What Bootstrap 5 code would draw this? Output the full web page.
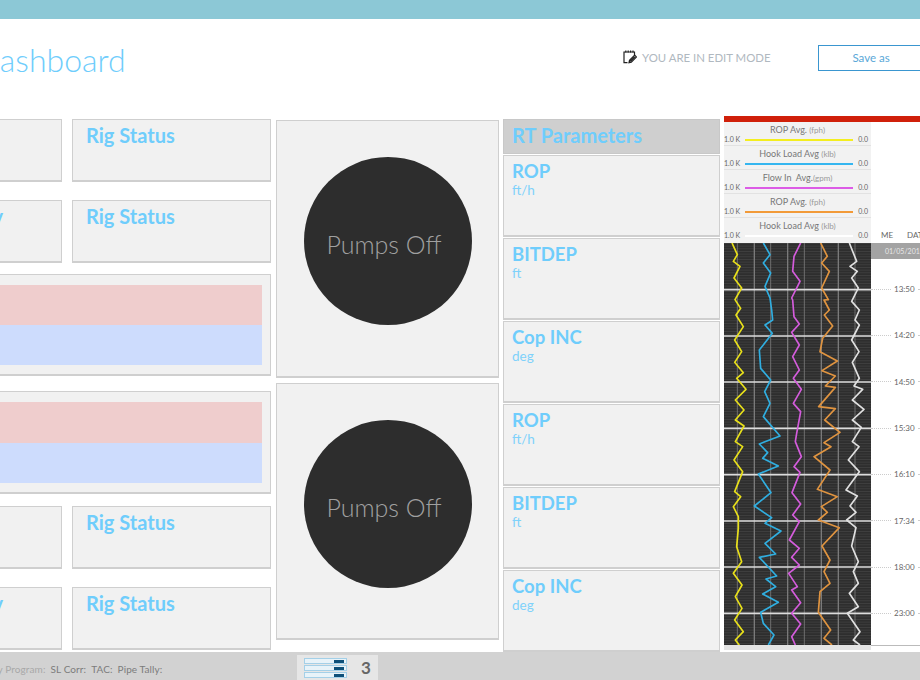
<!DOCTYPE html>
<html lang="en">
<head>
    <meta charset="UTF-8">
    <meta name="viewport" content="width=device-width, initial-scale=1.0">
    <title>Dashboard</title>
    <link rel="stylesheet" href="https://cdn.jsdelivr.net/npm/bootstrap@5.3.0/dist/css/bootstrap.min.css">
    <style>
        html, body { height: 100%; overflow: hidden; background: #fff; }
        body { font-family: Lato, "Noto Sans", sans-serif; }
        .screen { width: 1060px; margin-left: -130px; height: 680px; }
        .top-strip { height: 19px; background: #8cc8d6; }
        .head-area { height: 77px; margin-bottom: 20px; padding-left: 106px; }
        .page-title { font-size: 32px; font-weight: 300; color: #6fcdfc; margin: 0; width: 647px; padding-top: 6px; }
        .edit-note { width: 195px; font-size: 11.4px; color: #b0b8c0; gap: 5px; }
        .save-btn { width: 106px; height: 26px; padding: 0; font-size: 11.5px; color: #5aa8d8; border: 1px solid #3a96d0; border-radius: 0; background: #fff; }
        .body-area { height: 536px; }
        .col-left { width: 401px; padding-top: 3px; }
        .col-mid { width: 223px; margin-left: 5px; padding-top: 4px; gap: 5px; }
        .col-rt { width: 217px; margin-left: 4px; padding-top: 3px; gap: 1px; }
        .col-chart { margin-left: 4px; width: 196px; }
        .tile { background: #f1f1f1; border: 1px solid #cfcfcf; border-bottom-width: 2px; border-radius: 0; }
        .tile-pair { gap: 10px; height: 63px; }
        .tile-pair .tile { flex: 1 1 0; padding: 3px 13px; }
        .tile-pair .tile + .tile { flex: 0 0 199px; }
        .tile-name { font-size: 20px; font-weight: 700; color: #6fcdfc; line-height: 24px; white-space: nowrap; }
        .hide-start { padding-left: 2px; }
        .mt-a { margin-top: 18px; }
        .mt-b { margin-top: 11px; }
        .mt-c { margin-top: 15px; }
        .mt-d { margin-top: 12px; }
        .stack-tile { height: 102px; padding: 10px 8px 9px 0; }
        .stack-tall { height: 103px; }
        .bar-red { flex: 1; background: #efcdcd; }
        .bar-blue { flex: 1; background: #cddcfd; }
        .pump-tile { height: 257.5px; padding-bottom: 14px; }
        .pump-disc { width: 168px; height: 168px; background: #2d2d2d; color: #a0a0a0; font-size: 25px; font-weight: 300; padding: 7px 7px 0 0; }
        .rt-head { height: 35px; background: #cfcfcf; border: 1px solid #c8c8c8; padding: 0 8px; font-size: 20px; font-weight: 700; color: #6fcdfc; }
        .rt-row { height: 82px; padding: 3px 8px; }
        .rt-name { font-size: 18.5px; font-weight: 700; line-height: 25px; color: #6fcdfc; }
        .rt-unit { font-size: 13.5px; font-weight: 400; line-height: 13px; color: #7fd2fb; }
        .red-line { height: 6px; background: #d0200a; }
        .legend-box { width: 147px; height: 121px; background: #f2f2f2; }
        .legend-row { height: 24px; border-bottom: 1px solid #e2e2e2; color: #777; font-size: 9px; line-height: 11px; padding-top: 2px; text-align: center; }
        .legend-row small { font-size: 8px; color: #999; }
        .legend-scale { gap: 5px; font-size: 7px; line-height: 9px; color: #666; padding: 0 3px 0 0; margin-top: -1px; }
        .legend-swatch { flex: 1; height: 2px; }
        .chart-svg { display: block; width: 147px; height: 402px; }
        .time-col { width: 49px; height: 524px; border-bottom: 1px solid #bbb; color: #666; }
        .time-head { height: 121px; font-size: 8px; color: #666; gap: 14px; padding: 0 0 2px 10px; white-space: nowrap; }
        .time-date { height: 16px; width: 49px; background: #a3a3a3; color: #e8e8e8; font-size: 7px; line-height: 16px; padding-left: 14px; white-space: nowrap; overflow: hidden; }
        .time-list { padding-top: 7px; }
        .time-tick { height: 46.33px; font-size: 8px; gap: 3px; }
        .time-tick i { flex: 1; border-top: 1px dotted #ccc; }
        .time-tick i:first-child { flex: 0 0 20px; }
        .chart-foot { width: 147px; height: 5px; background: #e4e4e4; }
        .foot-bar { height: 28px; background: #d2d2d2; font-size: 10px; letter-spacing: .1px; color: #7c7c7c; padding-left: 110px; }
        .foot-dim { color: #a8a8a8; margin-right: 5px; }
        .foot-item { margin-right: 5px; }
        .foot-text { width: 317px; padding-top: 10px; white-space: nowrap; }
        .foot-chip { width: 81px; height: 25px; margin-top: 3px; background: #e6e6e6; padding: 2px 7px; }
        .chip-bars { width: 49px; gap: 1px; }
        .chip-bar { height: 6px; background: #e8f3f9; border: 1px solid #a4d0e8; padding: 1px 2px 1px 29px; }
        .chip-bar span { display: block; height: 3px; background: #0e5079; }
        .chip-num { font-size: 17px; font-weight: 700; color: #666; margin-left: 14px; }
    </style>
</head>
<body>
<div class="screen">
    <div class="top-strip"></div>

    <!-- Header -->
    <div class="head-area d-flex align-items-center">
        <h1 class="page-title">Dashboard</h1>
        <div class="edit-note d-flex align-items-center">
            <svg width="14" height="14" viewBox="0 0 14 14" fill="none" stroke="#222" stroke-width="1.2">
                <path d="M4.5 12.6H1V2h10.5v3"/>
                <path d="M2.8 2.5V.6M5.2 2.5V.6M7.6 2.5V.6M10 2.5V.6"/>
                <path d="M6 12.6l.5-2.2 5.2-5.2 1.8 1.8-5.2 5.1z" fill="#fff"/>
                <path d="M7.2 11.4l4.6-4.6" stroke-width="1.6"/>
            </svg>
            <span>YOU ARE IN EDIT MODE</span>
        </div>
        <button class="btn save-btn">Save as</button>
    </div>

    <div class="body-area d-flex">
        <!-- Rig tiles -->
        <div class="col-left">
            <div class="tile-pair d-flex">
                <div class="card tile"><div class="tile-name hide-start">Rig Status</div></div>
                <div class="card tile"><div class="tile-name">Rig Status</div></div>
            </div>
            <div class="tile-pair d-flex mt-a">
                <div class="card tile"><div class="tile-name hide-start">Rig Summary</div></div>
                <div class="card tile"><div class="tile-name">Rig Status</div></div>
            </div>
            <div class="card tile stack-tile mt-b">
                <div class="bar-red"></div>
                <div class="bar-blue"></div>
            </div>
            <div class="card tile stack-tile stack-tall mt-c">
                <div class="bar-red"></div>
                <div class="bar-blue"></div>
            </div>
            <div class="tile-pair d-flex mt-d">
                <div class="card tile"><div class="tile-name hide-start">Rig Status</div></div>
                <div class="card tile"><div class="tile-name">Rig Status</div></div>
            </div>
            <div class="tile-pair d-flex mt-a">
                <div class="card tile"><div class="tile-name hide-start">Rig Summary</div></div>
                <div class="card tile"><div class="tile-name">Rig Status</div></div>
            </div>
        </div>

        <!-- Pumps -->
        <div class="col-mid d-flex flex-column">
            <div class="card tile pump-tile d-flex align-items-center justify-content-center">
                <div class="pump-disc rounded-circle d-flex align-items-center justify-content-center">Pumps Off</div>
            </div>
            <div class="card tile pump-tile d-flex align-items-center justify-content-center">
                <div class="pump-disc rounded-circle d-flex align-items-center justify-content-center">Pumps Off</div>
            </div>
        </div>

        <!-- RT parameters -->
        <div class="col-rt d-flex flex-column">
            <div class="rt-head">RT Parameters</div>
            <div class="card tile rt-row"><div class="rt-name">ROP</div><div class="rt-unit">ft/h</div></div>
            <div class="card tile rt-row"><div class="rt-name">BITDEP</div><div class="rt-unit">ft</div></div>
            <div class="card tile rt-row"><div class="rt-name">Cop INC</div><div class="rt-unit">deg</div></div>
            <div class="card tile rt-row"><div class="rt-name">ROP</div><div class="rt-unit">ft/h</div></div>
            <div class="card tile rt-row"><div class="rt-name">BITDEP</div><div class="rt-unit">ft</div></div>
            <div class="card tile rt-row"><div class="rt-name">Cop INC</div><div class="rt-unit">deg</div></div>
        </div>

        <!-- Log chart -->
        <div class="col-chart">
            <div class="red-line"></div>
            <div class="d-flex">
                <div>
                    <div class="legend-box">
                        <div class="legend-row">ROP Avg. <small>(fph)</small>
                            <div class="legend-scale d-flex align-items-center"><span>1.0 K</span><i class="legend-swatch" style="background:#f4ee20"></i><span>0.0</span></div>
                        </div>
                        <div class="legend-row">Hook Load Avg <small>(klb)</small>
                            <div class="legend-scale d-flex align-items-center"><span>1.0 K</span><i class="legend-swatch" style="background:#35b6f0"></i><span>0.0</span></div>
                        </div>
                        <div class="legend-row">Flow In &nbsp;Avg.<small>(gpm)</small>
                            <div class="legend-scale d-flex align-items-center"><span>1.0 K</span><i class="legend-swatch" style="background:#dc5ce6"></i><span>0.0</span></div>
                        </div>
                        <div class="legend-row">ROP Avg. <small>(fph)</small>
                            <div class="legend-scale d-flex align-items-center"><span>1.0 K</span><i class="legend-swatch" style="background:#f29a38"></i><span>0.0</span></div>
                        </div>
                        <div class="legend-row border-0">Hook Load Avg <small>(klb)</small>
                            <div class="legend-scale d-flex align-items-center"><span>1.0 K</span><i class="legend-swatch" style="background:#fff"></i><span>0.0</span></div>
                        </div>
                    </div>
                    <svg class="chart-svg" viewBox="12 0 441 1206" preserveAspectRatio="none">
                        <defs>
                            <pattern id="fine" width="441" height="8" patternUnits="userSpaceOnUse">
                                <rect y="0" width="441" height="2" fill="#444"/>
                            </pattern>
                        </defs>
                        <rect x="12" width="441" height="1206" fill="#2e2e2e"/>
                        <rect x="12" width="441" height="1206" fill="url(#fine)"/>
                        <g stroke="#7a7a7a">
                            <path stroke-width="2.5" d="M52 0V1206M152 0V1206M253 0V1206M405 0V1206"/>
                            <path stroke-width="4" d="M103 0V1206M203 0V1206M304 0V1206M355 0V1206"/>
                        </g>
                        <path stroke="#dcdcdc" stroke-width="5" d="M12 140H453M12 279H453M12 417H453M12 556H453M12 695H453M12 834H453M12 972H453M12 1111H453"/>
                        <g fill="none" stroke-width="5" stroke-linejoin="round">
                            <polyline stroke="#e8e01a" points="36,0 52,35 40,55 60,70 42,105 65,135 45,170 62,196 48,216 70,251 44,291 65,326 44,358 70,389 50,406 78,439 46,471 72,501 46,531 72,549 46,596 68,611 42,651 68,686 44,746 62,761 40,791 55,821 55,856 50,911 65,956 40,991 66,1026 46,1061 66,1096 44,1131 70,1166 46,1191 58,1206"/>
                            <polyline stroke="#30aee0" points="130,0 150,35 130,60 152,90 135,130 150,165 155,201 158,231 135,246 157,271 118,321 122,376 152,411 134,446 150,481 130,521 180,579 118,603 143,629 128,646 175,669 115,693 153,749 103,789 155,824 135,841 183,864 135,901 167,933 118,943 170,999 138,1008 167,1031 128,1053 175,1078 122,1108 130,1141 162,1176 145,1206"/>
                            <polyline stroke="#d45cdc" points="242,0 222,40 218,85 240,115 215,165 218,171 222,221 238,243 215,268 238,306 218,341 238,381 220,406 244,439 220,481 242,506 230,571 226,596 244,641 222,671 240,688 216,749 242,783 218,816 238,836 208,891 238,916 215,943 238,966 206,991 232,1031 215,1041 242,1079 215,1111 242,1143 215,1181 226,1206"/>
                            <polyline stroke="#e09440" points="302,0 322,40 305,60 328,85 305,135 325,170 312,171 328,201 313,216 338,249 308,286 300,326 352,354 306,383 346,399 316,429 346,433 296,491 346,497 314,531 360,568 312,599 333,611 282,641 330,681 292,739 352,761 304,791 322,808 295,831 358,854 306,909 330,951 312,986 330,1021 300,1046 295,1108 332,1161 312,1186 336,1206"/>
                            <polyline stroke="#e0e0e0" points="388,0 410,55 390,70 412,85 395,105 415,135 395,175 418,201 405,231 418,246 395,291 417,326 397,358 418,406 402,429 428,439 397,471 432,499 397,531 424,553 397,596 417,611 385,651 418,686 378,741 412,759 390,789 408,808 380,831 408,854 395,909 415,956 400,986 415,1021 388,1051 415,1091 382,1111 420,1166 400,1191 420,1206"/>
                        </g>
                    </svg>
                    <div class="chart-foot"></div>
                </div>
                <div class="time-col align-self-start">
                    <div class="time-head d-flex align-items-end"><span>ME</span><span>DATE</span></div>
                    <div class="time-date">01/05/2013</div>
                    <div class="time-list">
                        <div class="time-tick d-flex align-items-center"><i></i><span>13:50</span><i></i></div>
                        <div class="time-tick d-flex align-items-center"><i></i><span>14:20</span><i></i></div>
                        <div class="time-tick d-flex align-items-center"><i></i><span>14:50</span><i></i></div>
                        <div class="time-tick d-flex align-items-center"><i></i><span>15:30</span><i></i></div>
                        <div class="time-tick d-flex align-items-center"><i></i><span>16:10</span><i></i></div>
                        <div class="time-tick d-flex align-items-center"><i></i><span>17:34</span><i></i></div>
                        <div class="time-tick d-flex align-items-center"><i></i><span>18:00</span><i></i></div>
                        <div class="time-tick d-flex align-items-center"><i></i><span>23:00</span><i></i></div>
                    </div>
                </div>
            </div>
        </div>
    </div>

    <!-- Footer -->
    <div class="foot-bar d-flex">
        <div class="foot-text">
            <span class="foot-dim">Daily Program:</span><span class="foot-item">SL Corr:</span><span class="foot-item">TAC:</span><span class="foot-item">Pipe Tally:</span>
        </div>
        <div class="foot-chip d-flex align-items-center">
            <div class="chip-bars d-flex flex-column">
                <div class="chip-bar"><span></span></div>
                <div class="chip-bar"><span></span></div>
                <div class="chip-bar"><span></span></div>
            </div>
            <div class="chip-num">3</div>
        </div>
    </div>
</div>
<script src="https://cdn.jsdelivr.net/npm/bootstrap@5.3.0/dist/js/bootstrap.bundle.min.js"></script>
</body>
</html>
